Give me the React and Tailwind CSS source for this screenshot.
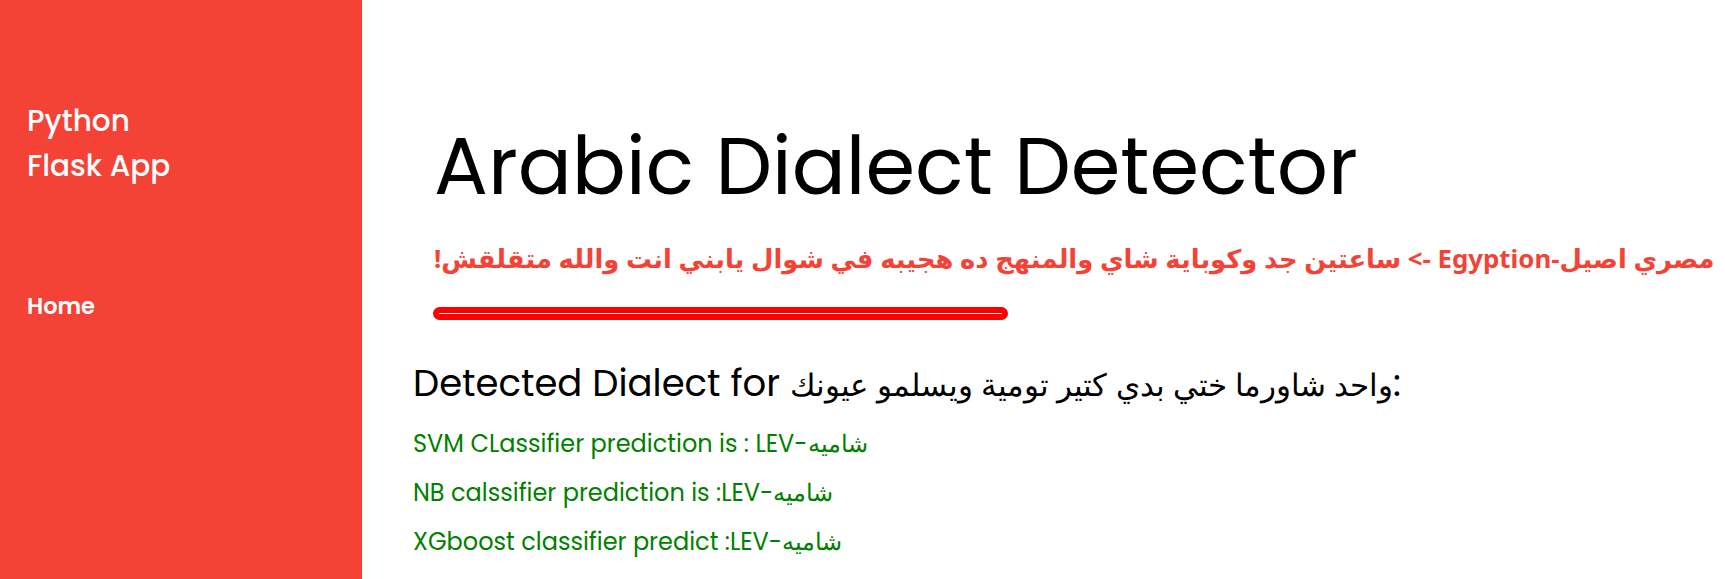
import React from "react";

export default function App() {
  return (
    <div className="flex w-full min-h-[579px] bg-white">
      <aside className="w-[362px] shrink-0 min-h-[579px] bg-[#f44336] pl-[27px] pt-[98px] font-['Poppins','Open_Sans',sans-serif] text-white">
        <div className="text-[29.5px] font-medium leading-[45px]">
          Python
          <br />
          Flask App
        </div>
        <nav className="mt-[107px]">
          <a className="block text-[22.5px] font-semibold leading-none">Home</a>
        </nav>
      </aside>
      <main className="flex-1 pl-[51px] pt-[126px] font-['Poppins','Open_Sans',sans-serif]">
        <div className="w-fit pl-[21px]">
          <h1 className="text-[80px] font-normal leading-none text-black">Arabic Dialect Detector</h1>
          <h3
            dir="rtl"
            className="mt-[32px] text-[25.8px] font-bold leading-[40px] text-[#f44336] font-['Segoe_UI','Noto_Sans','DejaVu_Sans',sans-serif] whitespace-nowrap"
          >
            مصري اصيل-Egyption -&gt; ساعتين جد وكوباية شاي والمنهج ده هجيبه في شوال يابني انت والله متقلقش!
          </h3>
        </div>
        <div className="ml-[20px] mt-[29px] h-[13px] w-[575px] rounded-[7px] border-[6px] border-[#ff0000] bg-white" />
        <h2 className="mt-[45px] text-[37px] font-normal leading-none text-black whitespace-nowrap">
          Detected Dialect for <span className="text-[30.6px]">واحد شاورما ختي بدي كتير تومية ويسلمو عيونك</span>:
        </h2>
        <div className="mt-[30px] flex flex-col gap-[25px] text-[24px] leading-none text-[#008000]">
          <p>SVM CLassifier prediction is : LEV-شاميه</p>
          <p>NB calssifier prediction is :LEV-شاميه</p>
          <p>XGboost classifier predict :LEV-شاميه</p>
        </div>
      </main>
    </div>
  );
}
